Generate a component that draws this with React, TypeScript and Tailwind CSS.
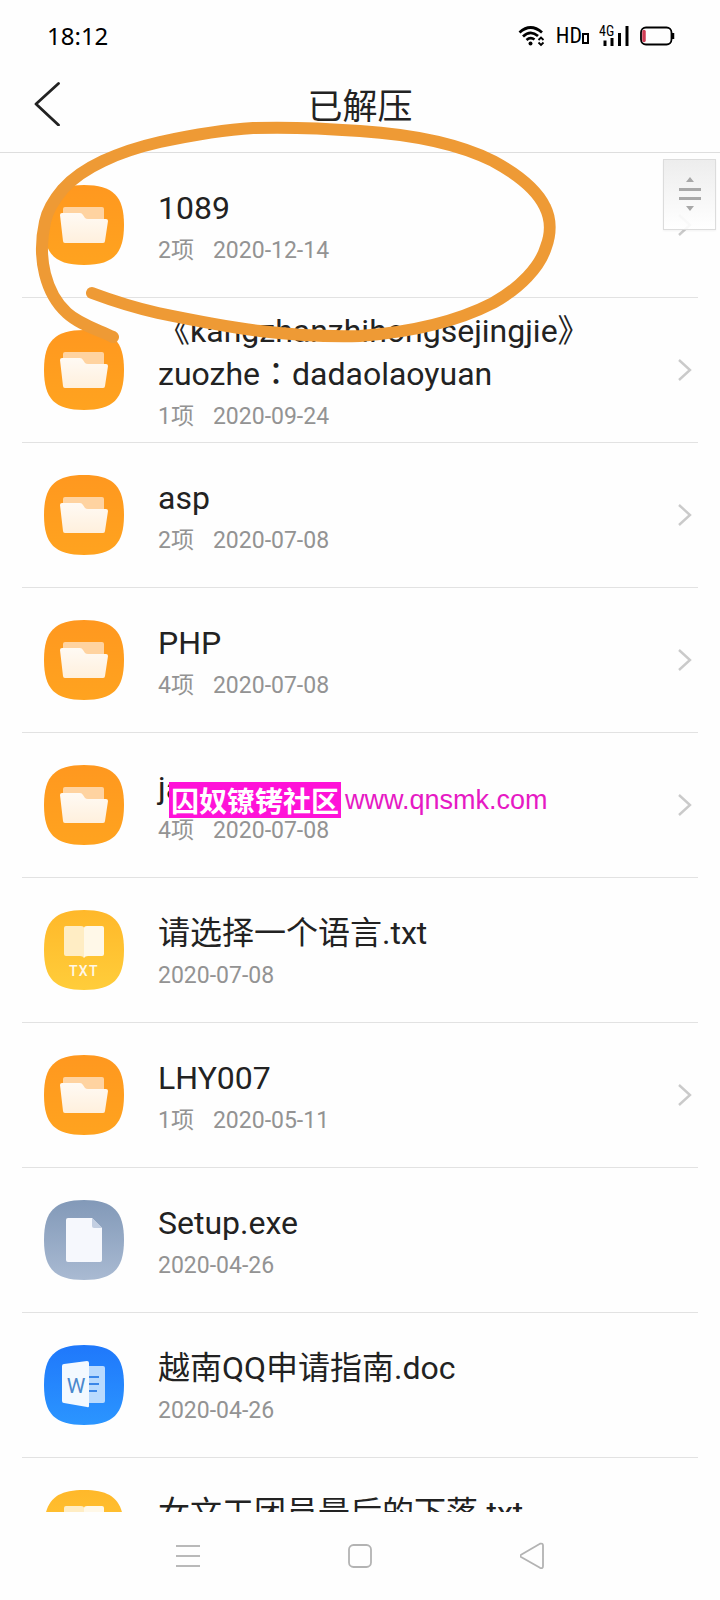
import React from 'react';

type IconKind = 'folder' | 'txt' | 'file' | 'doc';

interface Entry {
  name: string;
  date: string;
  icon: IconKind;
  count?: string;
}

const ENTRIES: Entry[] = [
  { name: '1089', count: '2项', date: '2020-12-14', icon: 'folder' },
  { name: '《kangzhanzhihongsejingjie》zuozhe：dadaolaoyuan', count: '1项', date: '2020-09-24', icon: 'folder' },
  { name: 'asp', count: '2项', date: '2020-07-08', icon: 'folder' },
  { name: 'PHP', count: '4项', date: '2020-07-08', icon: 'folder' },
  { name: 'java', count: '4项', date: '2020-07-08', icon: 'folder' },
  { name: '请选择一个语言.txt', date: '2020-07-08', icon: 'txt' },
  { name: 'LHY007', count: '1项', date: '2020-05-11', icon: 'folder' },
  { name: 'Setup.exe', date: '2020-04-26', icon: 'file' },
  { name: '越南QQ申请指南.doc', date: '2020-04-26', icon: 'doc' },
  { name: '女文工团员最后的下落.txt', date: '2020-04-26', icon: 'txt' },
];

const TILE_COLORS: Record<IconKind, [string, string]> = {
  folder: ['#ff981f', '#ffa31f'],
  txt: ['#ffb82a', '#ffcd3a'],
  file: ['#8299b8', '#a9bad2'],
  doc: ['#1f78fb', '#2b95ff'],
};

function FileIcon({ kind }: { kind: IconKind }) {
  const [from, to] = TILE_COLORS[kind];
  return (
    <svg viewBox="0 0 80 80" className="size-20 shrink-0" aria-hidden="true">
      <defs>
        <linearGradient id={`tile-${kind}`} x1="0" y1="0" x2="0" y2="1">
          <stop offset="0" stopColor={from} />
          <stop offset="1" stopColor={to} />
        </linearGradient>
        <linearGradient id="paper" x1="0" y1="0" x2="0" y2="1">
          <stop offset="0" stopColor="#fffaf4" />
          <stop offset="1" stopColor="#fff0dd" />
        </linearGradient>
      </defs>
      <path d="M40 0C69 0 80 11 80 40S69 80 40 80 0 69 0 40 11 0 40 0Z" fill={`url(#tile-${kind})`} />

      {kind === 'folder' && (
        <>
          <path d="M21 22H58Q60 22 60 24V40H19V24Q19 22 21 22Z" fill="#ffd3a0" />
          <path
            d="M18 28H36Q38 28 39 30L41 33Q42 34 44 34H62Q64 34 64 36L61 56Q61 58 59 58H21Q19 58 19 56L16 30Q16 28 18 28Z"
            fill="url(#paper)"
          />
        </>
      )}

      {kind === 'txt' && (
        <>
          <path d="M22 16H37Q40 16 40 18V48Q39 46 36 46H22Q20 46 20 44V18Q20 16 22 16Z" fill="#ffedc4" />
          <path d="M58 16H43Q40 16 40 18V48Q41 46 44 46H58Q60 46 60 44V18Q60 16 58 16Z" fill="#fff8e8" />
          <text x="40" y="66" textAnchor="middle" fill="#fff8e8" className="font-['Roboto'] text-[14px] font-medium tracking-widest">
            TXT
          </text>
        </>
      )}

      {kind === 'file' && (
        <>
          <path d="M24 18H48L58 28V60Q58 62 56 62H24Q22 62 22 60V20Q22 18 24 18Z" fill="#f6f8fd" />
          <path d="M48 18L58 28H50Q48 28 48 26Z" fill="#c3cfe2" />
        </>
      )}

      {kind === 'doc' && (
        <>
          <path d="M45 21H59Q61 21 61 23V56Q61 58 59 58H45Z" fill="#b9dafe" />
          <path d="M45 32H55M45 39H55M45 46H53" stroke="#3a86e8" strokeWidth="2" />
          <path d="M20 19L43 16Q45 16 45 18V61Q45 63 43 62L20 58Q18 58 18 56V21Q18 19 20 19Z" fill="#f3f9ff" />
          <text x="32" y="48" textAnchor="middle" fill="#4a88cc" className="font-['Roboto'] text-[21px]">
            W
          </text>
        </>
      )}
    </svg>
  );
}

function StatusBar() {
  return (
    <div className="flex h-[72px] shrink-0 items-center justify-between pl-[47px] pr-[45px] text-black">
      <span className="font-['Noto_Sans',sans-serif] text-2xl">18:12</span>

      <div className="flex items-center gap-[10px]">
        <svg viewBox="0 0 28 24" className="h-6 w-7" fill="none" stroke="#000" strokeWidth="2.8" aria-hidden="true">
          <path d="M1.500 8.500Q12.500-1.500 24 8.500M5 12.500Q12.500 5.500 20 12M8.500 16Q12.500 12.500 16.500 15.500" />
          <circle cx="12.500" cy="19.500" r="2" fill="#000" stroke="none" />
          <path d="M20.500 16L23 13.500L25.500 16M20.500 18.500L23 21L25.500 18.500" strokeWidth="1.800" />
        </svg>

        <div className="flex items-end">
          <span className="font-['Roboto_Condensed','Roboto',sans-serif] text-[22px] leading-[22px]">HD</span>
          <span className="mb-[3px] h-[11px] w-[7px] border-2 border-black" />
        </div>

        <svg viewBox="0 0 30 24" className="h-6 w-[30px]" aria-hidden="true">
          <text x="0" y="12" className="font-['Roboto_Condensed','Roboto'] text-[14px]">4G</text>
          <path d="M6 22V16.500M13 22V14M20.500 22V9M28 22V2" stroke="#000" strokeWidth="3" />
        </svg>

        <svg viewBox="0 0 36 24" className="h-6 w-9" fill="none" aria-hidden="true">
          <path d="M5 7.500V16.500" stroke="#cf3d55" strokeWidth="3.500" strokeLinecap="round" />
          <rect x="2" y="3.500" width="30.500" height="17" rx="5" stroke="#000" strokeWidth="1.800" />
          <path d="M34 9V15" stroke="#000" strokeWidth="2.500" />
        </svg>
      </div>
    </div>
  );
}

function EntryRow({ entry }: { entry: Entry }) {
  // Full-width colons sit in the middle of their cell only in the TC face
  const titleFont = entry.name.includes('：')
    ? "font-['Roboto','Noto_Sans_CJK_TC',sans-serif]"
    : "font-['Roboto','Noto_Sans_CJK_SC',sans-serif]";

  return (
    <li className="mx-[22px] h-[145px] border-b border-[#e2e2e2]">
      <a href="#" className="flex h-full items-center pl-[22px] pr-[6px]">
        <FileIcon kind={entry.icon} />
        <div className="ml-[34px] min-w-0 flex-1 pr-[30px]">
          <p className={`text-[32px] leading-[43px] text-[#222] [text-spacing-trim:space-all] ${titleFont}`}>
            {entry.name}
          </p>
          <p className="mt-2 flex gap-[19px] text-[23px] leading-[26px] text-[#939393]">
            {entry.count && <span>{entry.count}</span>}
            <span>{entry.date}</span>
          </p>
        </div>
        {entry.count && (
          <svg viewBox="0 0 14 22" className="h-[22px] w-[14px] shrink-0" fill="none" aria-hidden="true">
            <path d="M1 1L12 11L1 21" stroke="#cacaca" strokeWidth="2.400" />
          </svg>
        )}
      </a>
    </li>
  );
}

function NavBar() {
  return (
    <nav className="flex h-[88px] shrink-0 items-center justify-center gap-[148px] bg-[#fefefe]">
      <button aria-label="菜单">
        <svg viewBox="0 0 24 28" className="h-7 w-6" fill="none" stroke="#b9b9b9" strokeWidth="2">
          <path d="M0 4H24M0 14H24M0 24H24" />
        </svg>
      </button>
      <button aria-label="主页">
        <svg viewBox="0 0 24 28" className="h-7 w-6" fill="none" stroke="#b3b3b3" strokeWidth="1.800">
          <rect x="1" y="3" width="22" height="22" rx="4.500" />
        </svg>
      </button>
      <button aria-label="返回">
        <svg viewBox="0 0 24 28" className="h-7 w-6" fill="none" stroke="#b3b3b3" strokeWidth="1.800" strokeLinejoin="round">
          <path d="M1.500 12.500L20 1.700Q23 1 23 3.500V24Q23 27 20 25.800L1.500 15.300Q-1 14 1.500 12.500Z" />
        </svg>
      </button>
    </nav>
  );
}

export default function App() {
  return (
    <div className="relative flex h-screen flex-col overflow-hidden bg-[#fefefe] font-['Roboto','Noto_Sans_CJK_SC',sans-serif]">
      <StatusBar />

      <header className="grid h-[81px] shrink-0 grid-cols-[80px_1fr_80px] items-start border-b border-[#dedede] pt-2">
        <button aria-label="返回上一级" className="pl-[33px]">
          <svg viewBox="0 0 30 46" className="h-[46px] w-[30px]" fill="none" stroke="#222" strokeWidth="2.800" strokeLinecap="round" strokeLinejoin="round">
            <path d="M25.500 3.500L3 24L25.500 45" />
          </svg>
        </button>
        <h1 className="pt-1 text-center text-[35px] leading-[48px] text-[#222]">已解压</h1>
      </header>

      <main className="min-h-0 flex-1 overflow-hidden">
        <ul>
          {ENTRIES.map((entry) => (
            <EntryRow key={entry.name} entry={entry} />
          ))}
        </ul>
      </main>

      <NavBar />

      {/* Fast scroll handle */}
      <div className="absolute right-[4px] top-[159px] flex h-[71px] w-[53px] items-center justify-center border border-[#dcdcdc] bg-linear-to-b from-[#ededed] to-white/90 shadow-xs">
        <svg viewBox="0 0 22 36" className="h-9 w-[22px]" fill="#a8a8a8" aria-hidden="true">
          <path d="M11 0L15 5H7ZM0 11H22V14H0ZM0 20H22V23H0ZM11 34L15 29H7Z" />
        </svg>
      </div>

      {/* Hand-drawn marker loop round the first folder */}
      <svg viewBox="0 0 720 400" className="pointer-events-none absolute left-0 top-0 h-[400px] w-[720px]" fill="none" aria-hidden="true">
        <path
          d="M92 293C116 302 136 308 158 313C192 320 226 327 260 331C294 335 326 337 360 336C400 333 452 324 493 303C520 288 540 267 546 247C551 234 551 219 545 207C537 190 517 174 493 161C455 142 405 134 360 131C320 128 286 127 253 128C219 130 188 136 160 142C138 147 120 153 103 161C86 169 72 179 63 189C52 202 47 212 45 222C41 240 41 258 45 274C49 290 57 304 67 313C79 324 96 329 113 337"
          stroke="#ee9a35"
          strokeWidth="12"
          strokeLinecap="round"
          strokeLinejoin="round"
        />
      </svg>

      <div className="absolute left-[169px] top-[782px] flex items-center gap-[4px] leading-[36px]">
        <span className="bg-[#ff12d8] px-[2px] font-['Noto_Sans_CJK_SC',sans-serif] text-[28px] font-bold text-white">囚奴镣铐社区</span>
        <a href="#" className="font-['Liberation_Sans',sans-serif] text-[27px] text-[#e619c4]">www.qnsmk.com</a>
      </div>
    </div>
  );
}
